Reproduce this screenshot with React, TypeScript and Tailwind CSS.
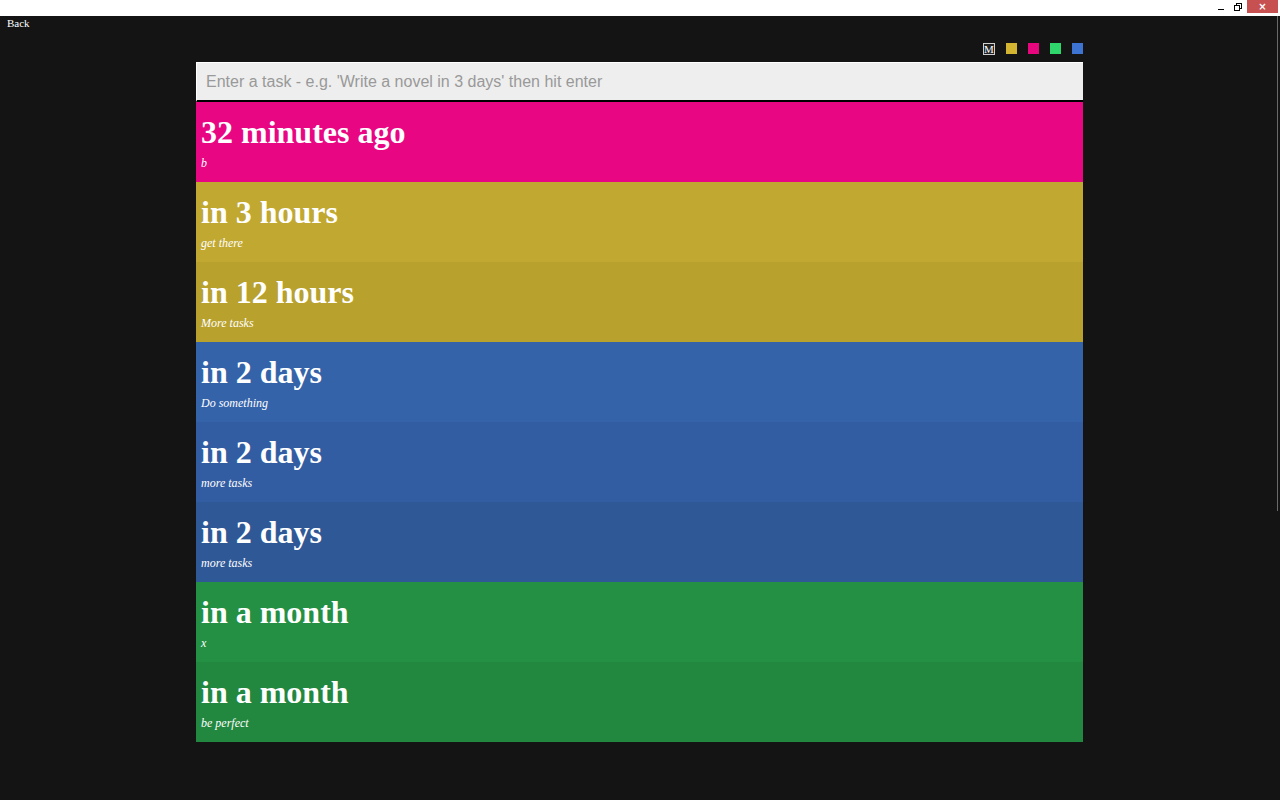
import React from 'react';

type Task = { when: string; text: string; bg: string };

const tasks: Task[] = [
  { when: '32 minutes ago', text: 'b', bg: 'bg-[#e80683]' },
  { when: 'in 3 hours', text: 'get there', bg: 'bg-[#c1a831]' },
  { when: 'in 12 hours', text: 'More tasks', bg: 'bg-[#b8a12d]' },
  { when: 'in 2 days', text: 'Do something', bg: 'bg-[#3563aa]' },
  { when: 'in 2 days', text: 'more tasks', bg: 'bg-[#335da2]' },
  { when: 'in 2 days', text: 'more tasks', bg: 'bg-[#2f5897]' },
  { when: 'in a month', text: 'x', bg: 'bg-[#239044]' },
  { when: 'in a month', text: 'be perfect', bg: 'bg-[#22873f]' },
];

const serif = { fontFamily: '"Liberation Serif", "Times New Roman", serif' };

const App: React.FC = () => {
  return (
    <div className="w-[1280px] h-[800px] bg-[#141414] flex flex-col overflow-hidden" style={serif}>
      {/* window chrome */}
      <div className="h-[16px] bg-white flex justify-end items-start shrink-0">
        <div className="w-[16px] h-[13px] flex items-end justify-center pb-[3px]">
          <div className="w-[6px] h-[1px] bg-black" />
        </div>
        <div className="w-[18px] h-[13px] flex items-center justify-center">
          <div className="relative w-[8px] h-[8px]">
            <div className="absolute right-0 top-0 w-[6px] h-[6px] border border-black" />
            <div className="absolute left-0 bottom-0 w-[6px] h-[6px] border border-black bg-white" />
          </div>
        </div>
        <div className="w-[31px] h-[13px] bg-[#c75050] flex items-center justify-center text-white text-[10px] leading-none font-bold mr-[2px]" style={{ fontFamily: '"DejaVu Sans", sans-serif' }}>
          ×
        </div>
      </div>

      <div className="flex-1 flex">
        <div className="flex-1 flex flex-col">
          <div className="pl-[7px] pt-[1px] text-white text-[11px] leading-[13px]">Back</div>

          <div className="w-[887px] ml-[196px] mt-[13px] flex flex-col">
            <div className="flex justify-end items-center gap-[11px] h-[11px] mb-[8px]">
              <div className="w-[12px] h-[12px] border border-[#cfcfcf] text-white text-[11px] leading-[10px] flex items-center justify-center bg-[#222]">M</div>
              <div className="w-[11px] h-[11px] bg-[#d3b532]" />
              <div className="w-[11px] h-[11px] bg-[#e8067f]" />
              <div className="w-[11px] h-[11px] bg-[#2ed66b]" />
              <div className="w-[11px] h-[11px] bg-[#3d73d1]" />
            </div>

            <div className="h-[40px] bg-[#eeeeee] border-t border-l border-[#ffffff] border-b-2 border-b-black flex items-center pl-[9px]">
              <span className="text-[16px] text-[#999999]" style={{ fontFamily: '"Liberation Sans", Arial, sans-serif' }}>
                Enter a task - e.g. 'Write a novel in 3 days' then hit enter
              </span>
            </div>

            {tasks.map((t, i) => (
              <div key={i} className={`${t.bg} h-[80px] px-[5px] pt-[11px] text-white`}>
                <div className="text-[32px] font-bold leading-[38px]">{t.when}</div>
                <div className="text-[12px] italic leading-[14px] mt-[5px]">{t.text}</div>
              </div>
            ))}
          </div>
        </div>
        <div className="w-[3px] flex flex-col">
          <div className="h-[495px] w-[1px] bg-[#6a6a6a]" />
        </div>
      </div>
    </div>
  );
};

export default App;
